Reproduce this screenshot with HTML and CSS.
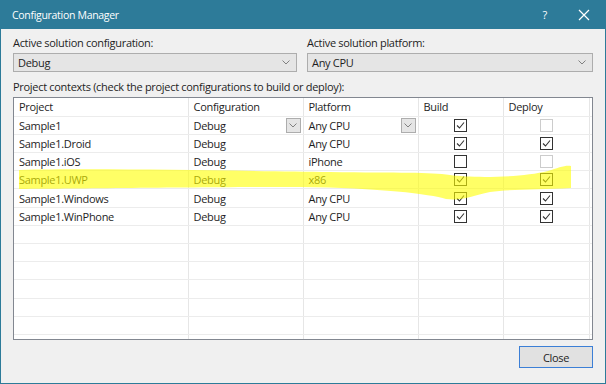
FILE: index.html
```html
<!DOCTYPE html>
<html lang="en">
<head>
    <meta charset="UTF-8">
    <title>Configuration Manager</title>
    <link rel="stylesheet" href="styles.css">
</head>
<body>
    <div class="dialog">
        <div class="titlebar">
            <span class="title">Configuration Manager</span>
            <span class="help">?</span>
            <svg class="close-x" width="12" height="12" viewBox="0 0 12 12"><path d="M1 1 L11 11 M11 1 L1 11" stroke="#fff" stroke-width="1.2" fill="none"/></svg>
        </div>

        <div class="content">
            <div class="solution">
                <div class="field">
                    <div class="label">Active solution configuration:</div>
                    <div class="combo">
                        <span>Debug</span>
                        <svg class="chevron" width="8" height="5" viewBox="0 0 8 5"><path d="M0.5 0.5 L4 4 L7.5 0.5" stroke="#808080" fill="none"/></svg>
                    </div>
                </div>
                <div class="field">
                    <div class="label">Active solution platform:</div>
                    <div class="combo">
                        <span>Any CPU</span>
                        <svg class="chevron" width="8" height="5" viewBox="0 0 8 5"><path d="M0.5 0.5 L4 4 L7.5 0.5" stroke="#808080" fill="none"/></svg>
                    </div>
                </div>
            </div>

            <div class="label contexts">Project contexts (check the project configurations to build or deploy):</div>

            <div class="grid-box">
                <table class="grid">
                    <colgroup>
                        <col class="c-project">
                        <col class="c-config">
                        <col class="c-platform">
                        <col class="c-build">
                        <col class="c-deploy">
                        <col>
                    </colgroup>
                    <thead>
                        <tr>
                            <th>Project</th>
                            <th>Configuration</th>
                            <th>Platform</th>
                            <th>Build</th>
                            <th>Deploy</th>
                            <th></th>
                        </tr>
                    </thead>
                    <tbody id="rows"></tbody>
                </table>
            </div>

            <div class="footer">
                <button class="btn">Close</button>
            </div>
        </div>

        <!-- marker stroke somebody drew over the UWP row -->
        <svg class="highlight" width="606" height="384" viewBox="0 0 606 384">
            <path d="M19 170 C100 168 250 171 330 172 C400 173 430 172 450 175 C470 178 520 178 548 171 C558 168 565 165 571 166 L571 188 C540 190 510 189 490 192 C472 196 462 201 446 199 C430 194 380 188 300 187 C200 187 60 189 19 189 Z" fill="rgba(255,255,0,0.6)"/>
        </svg>
    </div>

    <script>
        const projects = [
            { name: "Sample1", config: "Debug", platform: "Any CPU", build: "on", deploy: "off", combo: true },
            { name: "Sample1.Droid", config: "Debug", platform: "Any CPU", build: "on", deploy: "on" },
            { name: "Sample1.iOS", config: "Debug", platform: "iPhone", build: "empty", deploy: "off" },
            { name: "Sample1.UWP", config: "Debug", platform: "x86", build: "on", deploy: "on" },
            { name: "Sample1.Windows", config: "Debug", platform: "Any CPU", build: "on", deploy: "on" },
            { name: "Sample1.WinPhone", config: "Debug", platform: "Any CPU", build: "on", deploy: "on" }
        ];

        const chevron = '<svg width="8" height="5" viewBox="0 0 8 5"><path d="M0.5 0.5 L4 4 L7.5 0.5" stroke="#808080" fill="none"/></svg>';

        function checkbox(state) {
            let tick = state === "on" ? '<path d="M3 6.5 L5.5 9 L10 3.5" stroke="#333" stroke-width="1.1" fill="none"/>' : "";
            let cls = state === "off" ? "check disabled" : "check";
            return `<svg class="${cls}" width="13" height="13" viewBox="0 0 13 13"><rect x="0.5" y="0.5" width="12" height="12" fill="#fff"/>${tick}</svg>`;
        }

        function cell(text, combo) {
            if (!combo) return `<td>${text}</td>`;
            return `<td><div class="cell-combo"><span>${text}</span><span class="drop">${chevron}</span></div></td>`;
        }

        const tbody = document.getElementById("rows");
        let html = "";
        projects.forEach(p => {
            html += `<tr>${cell(p.name)}${cell(p.config, p.combo)}${cell(p.platform, p.combo)}`;
            html += `<td class="center">${checkbox(p.build)}</td><td class="center">${checkbox(p.deploy)}</td><td></td></tr>`;
        });
        for (let i = 0; i < 7; i++) {
            html += "<tr><td></td><td></td><td></td><td></td><td></td><td></td></tr>";
        }
        tbody.innerHTML = html;
    </script>
</body>
</html>
```

FILE: styles.css
```css
body {
    margin: 0;
    font-family: 'Open Sans', sans-serif;
    font-size: 11px;
    letter-spacing: -0.3px;
    color: #1e1e1e;
}

.dialog {
    position: relative;
    width: 606px;
    height: 384px;
    box-sizing: border-box;
    border: 1px solid #2d7b99;
    border-top: none;
    background-color: #f0f0f0;
    display: flex;
    flex-direction: column;
}

.titlebar {
    height: 29px;
    margin: 0 -1px;
    background-color: #2d7b99;
    color: #fff;
    display: flex;
    align-items: center;
    padding: 0 16px 0 12px;
    font-size: 10.5px;
}

.title {
    flex: 1;
}

.help {
    margin-right: 31px;
    font-size: 11px;
}

.content {
    flex: 1;
    padding: 6px 12px 0 12px;
    display: flex;
    flex-direction: column;
}

.solution {
    display: grid;
    grid-template-columns: 284px 1fr;
    gap: 10px;
}

.label {
    line-height: 16px;
    margin-bottom: 2px;
}

.combo {
    height: 19px;
    box-sizing: border-box;
    border: 1px solid #adadad;
    background-color: #e5e5e5;
    display: flex;
    align-items: center;
    justify-content: space-between;
    padding: 0 6px 0 4px;
}

.contexts {
    margin-top: 7px;
}

.grid-box {
    height: 243px;
    box-sizing: border-box;
    border: 1px solid #828790;
    background-color: #fff;
    overflow: hidden;
}

.grid {
    width: 100%;
    border-collapse: collapse;
    table-layout: fixed;
}

.c-project { width: 174px; }
.c-config { width: 115px; }
.c-platform { width: 115px; }
.c-build { width: 85px; }
.c-deploy { width: 86px; }

.grid th,
.grid td {
    height: 18.2px;
    padding: 0 0 0 5px;
    border-right: 1px solid #e6e6e6;
    border-bottom: 1px solid #ececec;
    text-align: left;
    font-weight: normal;
    white-space: nowrap;
    box-sizing: border-box;
}

.grid th:last-child,
.grid td:last-child {
    border-right: none;
}

.grid td.center {
    padding: 0;
    text-align: center;
}

.check {
    display: block;
    margin: 0 auto;
}

.check rect {
    stroke: #333;
}

.check.disabled rect {
    stroke: #cccccc;
}

.cell-combo {
    display: flex;
    align-items: center;
    justify-content: space-between;
    padding-right: 2px;
}

.drop {
    width: 15px;
    height: 15px;
    box-sizing: border-box;
    border: 1px solid #adadad;
    background-color: #e5e5e5;
    display: flex;
    align-items: center;
    justify-content: center;
}

.footer {
    display: flex;
    justify-content: flex-end;
    padding-top: 6px;
}

.btn {
    width: 74px;
    height: 22px;
    border: 1px solid #3c7fd6;
    background-color: #e1e1e1;
    font-family: inherit;
    font-size: 11px;
    letter-spacing: inherit;
    color: #1e1e1e;
    padding: 0;
}

.highlight {
    position: absolute;
    top: 0;
    left: -1px;
    pointer-events: none;
}
```
